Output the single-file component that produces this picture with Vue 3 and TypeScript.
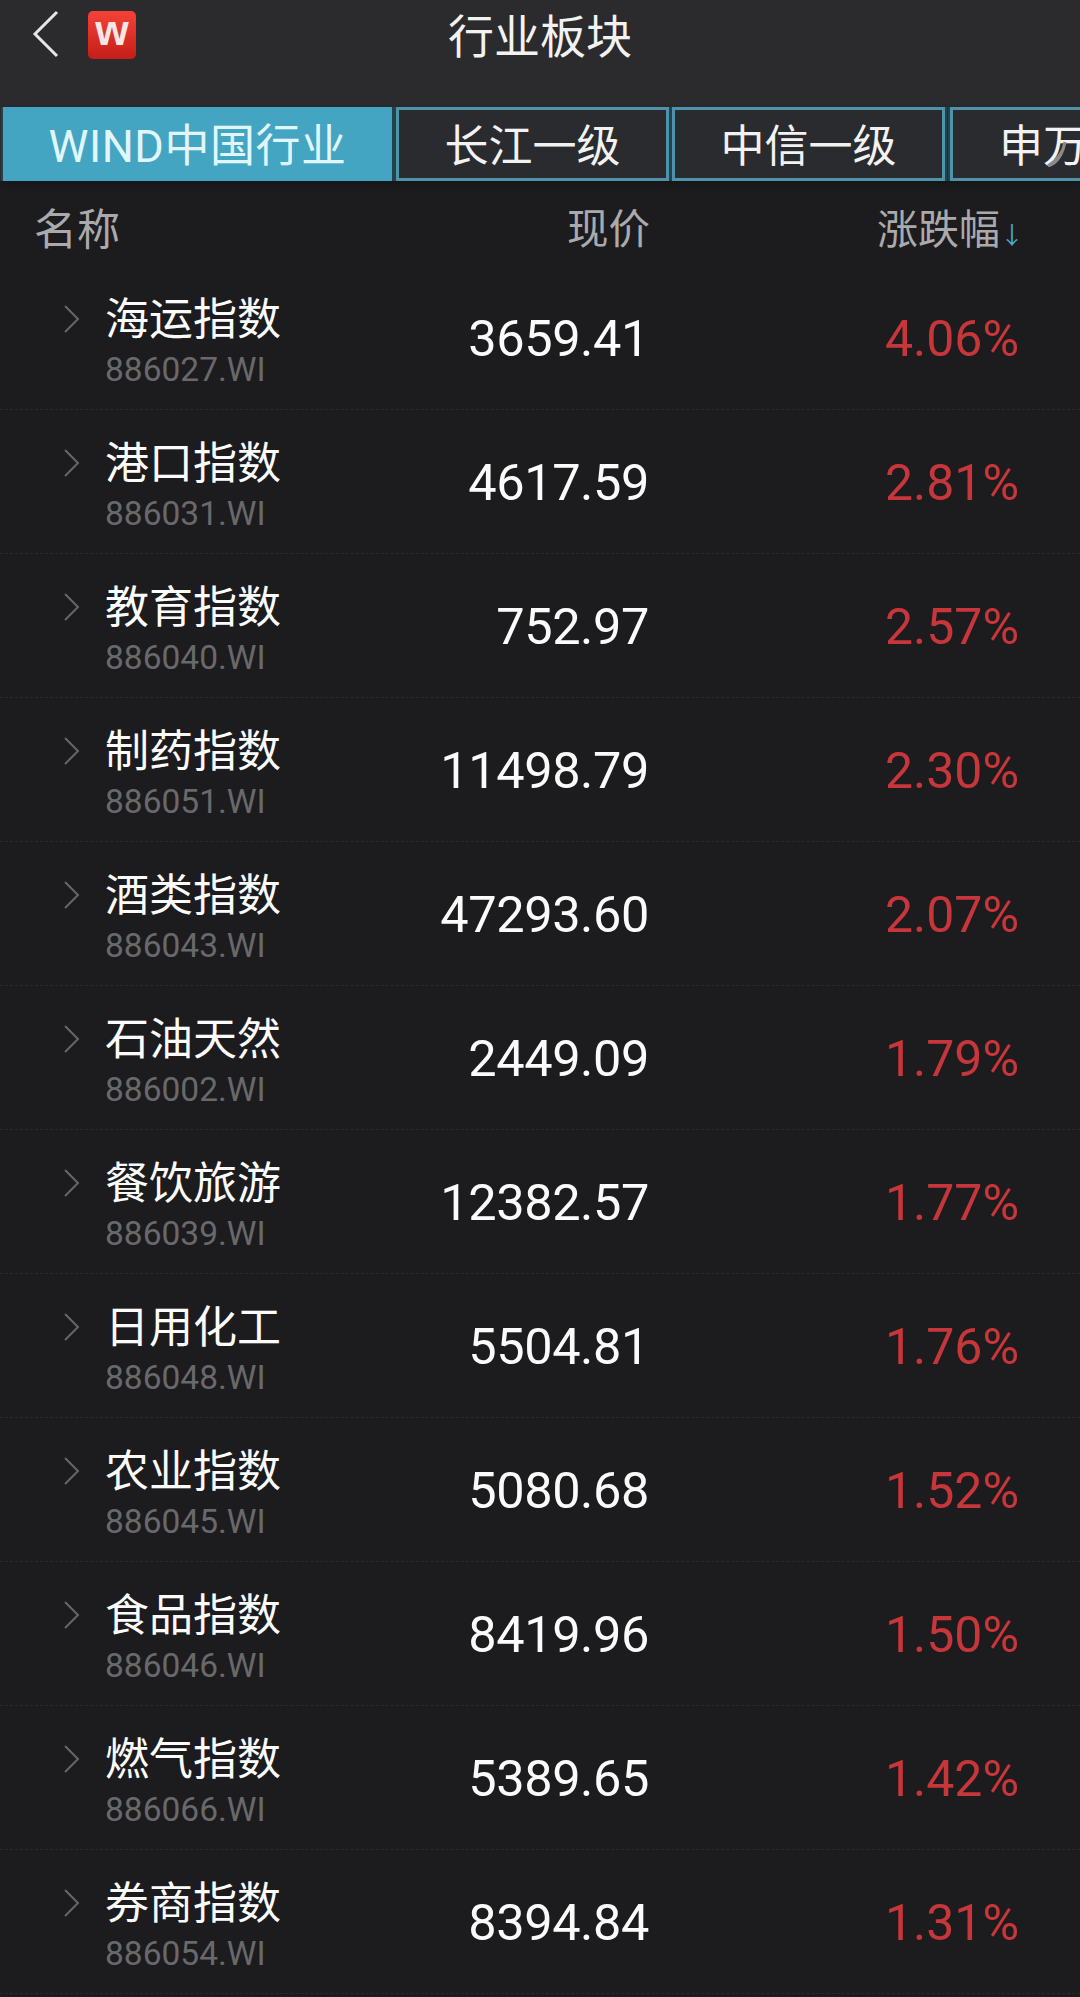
<script setup lang="ts">
interface Row {
  name: string
  code: string
  price: string
  change: string
}

const tabs = ['WIND中国行业', '长江一级', '中信一级', '申万一级']

const rows: Row[] = [
  { name: '海运指数', code: '886027.WI', price: '3659.41', change: '4.06%' },
  { name: '港口指数', code: '886031.WI', price: '4617.59', change: '2.81%' },
  { name: '教育指数', code: '886040.WI', price: '752.97', change: '2.57%' },
  { name: '制药指数', code: '886051.WI', price: '11498.79', change: '2.30%' },
  { name: '酒类指数', code: '886043.WI', price: '47293.60', change: '2.07%' },
  { name: '石油天然', code: '886002.WI', price: '2449.09', change: '1.79%' },
  { name: '餐饮旅游', code: '886039.WI', price: '12382.57', change: '1.77%' },
  { name: '日用化工', code: '886048.WI', price: '5504.81', change: '1.76%' },
  { name: '农业指数', code: '886045.WI', price: '5080.68', change: '1.52%' },
  { name: '食品指数', code: '886046.WI', price: '8419.96', change: '1.50%' },
  { name: '燃气指数', code: '886066.WI', price: '5389.65', change: '1.42%' },
  { name: '券商指数', code: '886054.WI', price: '8394.84', change: '1.31%' },
]
</script>

<template>
  <div class="page">
    <header class="topbar">
      <svg class="back" width="30" height="48" viewBox="0 0 30 48">
        <path d="M26 2 L4 24 L26 46" fill="none" stroke="#e6e6e6" stroke-width="3" />
      </svg>
      <div class="logo">w</div>
      <h1 class="title">行业板块</h1>
    </header>

    <nav class="tabs">
      <div
        v-for="(tab, i) in tabs"
        :key="tab"
        class="tab"
        :class="['tab-' + i, { active: i === 0 }]"
      >
        {{ tab }}
      </div>
      <!-- smudge left on the last tab's second character -->
      <svg class="smudge" width="20" height="26" viewBox="0 0 20 26">
        <path d="M18 1 C16 12 9 20 1 25 C8 23 15 16 18 1 Z" fill="#8a8a8c" stroke="#8a8a8c" stroke-width="3" />
      </svg>
    </nav>

    <div class="columns">
      <span class="col-name">名称</span>
      <span class="col-price">现价</span>
      <span class="col-change">涨跌幅<i class="arrow">↓</i></span>
    </div>

    <div class="list">
      <div v-for="row in rows" :key="row.code" class="row">
        <svg class="chevron" width="18" height="30" viewBox="0 0 18 30">
          <path d="M2 2 L15 15 L2 28" fill="none" stroke="#666" stroke-width="2" />
        </svg>
        <div class="info">
          <div class="name">{{ row.name }}</div>
          <div class="code">{{ row.code }}</div>
        </div>
        <div class="price">{{ row.price }}</div>
        <div class="change">{{ row.change }}</div>
      </div>
    </div>
  </div>
</template>

<style>
body {
  background: #1c1c1e;
}
</style>

<style scoped>
.page {
  width: 1080px;
  height: 1997px;
  overflow: hidden;
  background: #1c1c1e;
  font-family: Roboto, "Noto Sans CJK SC", sans-serif;
}

.topbar {
  height: 107px;
  display: flex;
  align-items: flex-start;
  background: #2b2b2d;
  position: relative;
}

.back {
  margin: 10px 0 0 31px;
}

.logo {
  width: 48px;
  height: 48px;
  margin: 11px 0 0 27px;
  border-radius: 5px;
  background: linear-gradient(#f4423a, #c41e16);
  color: #f6e6e6;
  font: 700 43px/38px "Liberation Sans", sans-serif;
  text-align: center;
}

.title {
  position: absolute;
  left: 0;
  right: 0;
  top: 8px;
  margin: 0;
  text-align: center;
  font-size: 46px;
  line-height: 58px;
  font-weight: 400;
  color: #f2f2f2;
}

.tabs {
  height: 74px;
  display: flex;
  padding-left: 3px;
  background: #2b2b2d;
  box-shadow: 0 3px 6px rgba(0, 0, 0, 0.25);
  position: relative;
  overflow: hidden;
}

.tab {
  flex: none;
  box-sizing: border-box;
  border: 3px solid #4e93a8;
  background: #2a2b2e;
  color: #f2f2f2;
  font-size: 44px;
  line-height: 74px;
  text-align: center;
  white-space: nowrap;
  box-shadow: 0 0 0 2px #24424d;
}

.tab-0 {
  width: 389px;
  margin-right: 4px;
  font-size: 45px;
  letter-spacing: 0.5px;
}

.tab-1 {
  width: 273px;
  margin-right: 3px;
}

.tab-2 {
  width: 273px;
  margin-right: 5px;
}

.tab-3 {
  width: 260px;
  text-align: left;
  padding-left: 46px;
}

.tab.active {
  background: #43a5c2;
  border-color: #43a5c2;
  color: #e0f6fa;
}

.smudge {
  position: absolute;
  left: 1047px;
  top: 34px;
}

.columns {
  height: 85px;
  display: flex;
  align-items: center;
  padding-top: 5px;
  box-sizing: border-box;
  font-size: 41.5px;
  color: #aaaaac;
}

.col-name {
  margin-left: 34px;
  width: 616px;
  font-size: 43px;
}

.col-price {
  width: 0;
  white-space: nowrap;
  direction: rtl;
}

.col-change {
  margin-left: auto;
  margin-right: 56px;
  font-size: 41px;
}

.arrow {
  font-style: normal;
  font-size: 24px;
  color: #4aa6cc;
}

.row {
  height: 144px;
  box-sizing: border-box;
  display: flex;
  align-items: center;
  border-bottom: 1px dashed #2a2a2c;
}

.chevron {
  margin: -38px 0 0 63px;
  flex: none;
}

.info {
  width: 268px;
  margin-left: 24px;
  padding-top: 7px;
}

.name {
  font-size: 44px;
  line-height: 56px;
  color: #fbfbfb;
}

.code {
  font-size: 33.5px;
  line-height: 43px;
  color: #69696b;
}

.price {
  width: 276px;
  padding-top: 2px;
  text-align: right;
  font-size: 50.5px;
  letter-spacing: -0.4px;
  color: #fbfbfb;
}

.change {
  width: 370px;
  padding-top: 2px;
  text-align: right;
  font-size: 50px;
  color: #c6363b;
}
</style>
